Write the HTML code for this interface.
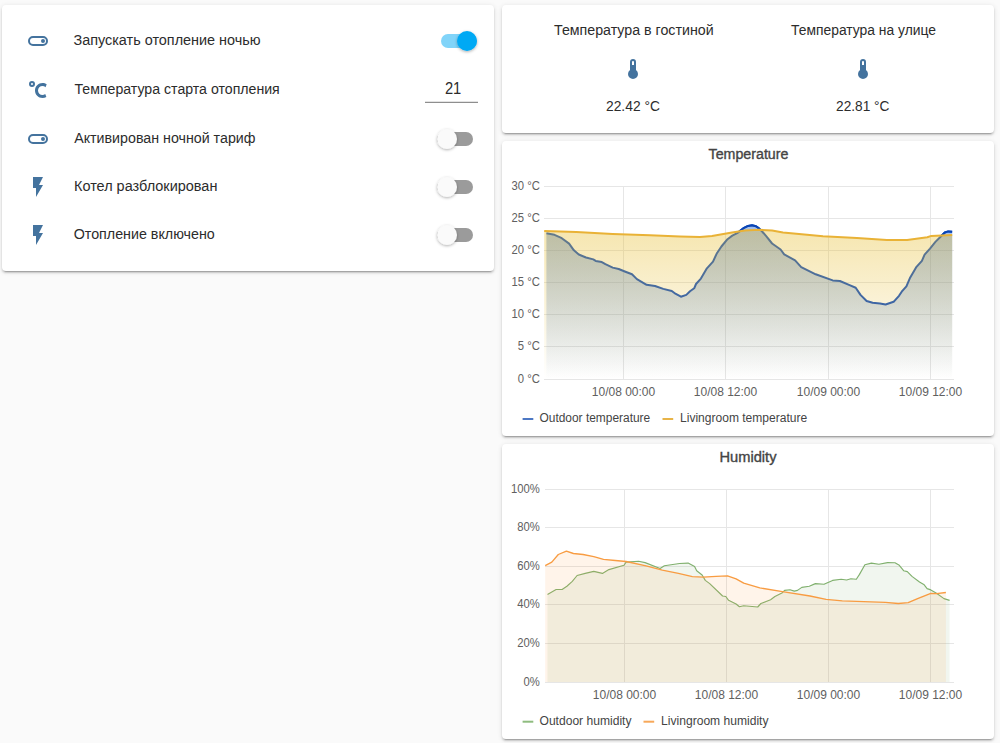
<!DOCTYPE html>
<html><head><meta charset="utf-8"><title>Dashboard</title>
<style>
html,body{margin:0;padding:0;}
body{width:1000px;height:743px;overflow:hidden;background:#fafafa;position:relative;font-family:"Liberation Sans", sans-serif;}
.card{position:absolute;background:#fff;border-radius:4px;box-shadow:0 2px 2px 0 rgba(0,0,0,.14),0 1px 5px 0 rgba(0,0,0,.12),0 3px 1px -2px rgba(0,0,0,.2);}
</style></head><body>
<div class="card" style="left:2px;top:5px;width:492px;height:266px"></div>
<div class="card" style="left:502px;top:5px;width:492px;height:128px"></div>
<div class="card" style="left:502px;top:141px;width:492px;height:295px"></div>
<div class="card" style="left:502px;top:444px;width:492px;height:295px"></div>
<svg width="1000" height="743" viewBox="0 0 1000 743" style="position:absolute;left:0;top:0" font-family='"Liberation Sans", sans-serif'><defs><linearGradient id="gb" gradientUnits="userSpaceOnUse" x1="0" y1="186" x2="0" y2="379"><stop offset="0" stop-color="#2060c8" stop-opacity="0.53"/><stop offset="1" stop-color="#2060c8" stop-opacity="0"/></linearGradient><linearGradient id="gy" gradientUnits="userSpaceOnUse" x1="0" y1="186" x2="0" y2="379"><stop offset="0" stop-color="#e7be32" stop-opacity="0.5"/><stop offset="1" stop-color="#e7be32" stop-opacity="0"/></linearGradient></defs><path transform="translate(26,29)" d="M17,7H7A5,5 0 0,0 2,12A5,5 0 0,0 7,17H17A5,5 0 0,0 22,12A5,5 0 0,0 17,7M17,15H7A3,3 0 0,1 4,12A3,3 0 0,1 7,9H17A3,3 0 0,1 20,12A3,3 0 0,1 17,15M17,10A2,2 0 0,0 15,12A2,2 0 0,0 17,14A2,2 0 0,0 19,12A2,2 0 0,0 17,10Z" fill="#44739e"/><path transform="translate(26,78)" d="M16.5,5C18.05,5 19.5,5.47 20.69,6.28L19.53,9.17C18.73,8.44 17.67,8 16.5,8C14,8 12,10 12,12.5C12,15 14,17 16.5,17C17.53,17 18.47,16.65 19.23,16.07L20.37,18.93C19.24,19.6 17.92,20 16.5,20C12.36,20 9,16.64 9,12.5C9,8.36 12.36,5 16.5,5M6,3A3,3 0 0,1 9,6A3,3 0 0,1 6,9A3,3 0 0,1 3,6A3,3 0 0,1 6,3M6,5A1,1 0 0,0 5,6A1,1 0 0,0 6,7A1,1 0 0,0 7,6A1,1 0 0,0 6,5Z" fill="#44739e"/><path transform="translate(26,127)" d="M17,7H7A5,5 0 0,0 2,12A5,5 0 0,0 7,17H17A5,5 0 0,0 22,12A5,5 0 0,0 17,7M17,15H7A3,3 0 0,1 4,12A3,3 0 0,1 7,9H17A3,3 0 0,1 20,12A3,3 0 0,1 17,15M17,10A2,2 0 0,0 15,12A2,2 0 0,0 17,14A2,2 0 0,0 19,12A2,2 0 0,0 17,10Z" fill="#44739e"/><path transform="translate(26,175)" d="M7,2V13H10V22L17,10H13L17,2H7Z" fill="#44739e"/><path transform="translate(26,223)" d="M7,2V13H10V22L17,10H13L17,2H7Z" fill="#44739e"/><text x="73.47" y="45" font-size="14" fill="#2c2c2c" textLength="187.12" lengthAdjust="spacingAndGlyphs">Запускать отопление ночью</text><text x="74.50" y="94" font-size="14" fill="#2c2c2c" textLength="205.24" lengthAdjust="spacingAndGlyphs">Температура старта отопления</text><text x="74.20" y="143" font-size="14" fill="#2c2c2c" textLength="181.29" lengthAdjust="spacingAndGlyphs">Активирован ночной тариф</text><text x="73.97" y="191" font-size="14" fill="#2c2c2c" textLength="143.42" lengthAdjust="spacingAndGlyphs">Котел разблокирован</text><text x="73.68" y="239" font-size="14" fill="#2c2c2c" textLength="141.10" lengthAdjust="spacingAndGlyphs">Отопление включено</text><text x="444.88" y="94" font-size="16" fill="#2c2c2c" textLength="16.35" lengthAdjust="spacingAndGlyphs">21</text><rect x="425" y="101.8" width="53" height="1" fill="#737373"/><text x="554.00" y="35" font-size="14" fill="#2c2c2c" textLength="159.59" lengthAdjust="spacingAndGlyphs">Температура в гостиной</text><path transform="translate(621,57)" d="M15,13V5A3,3 0 0,0 9,5V13A5,5 0 0,0 7,17A5,5 0 0,0 12,22A5,5 0 0,0 17,17A5,5 0 0,0 15,13M12,4A1,1 0 0,1 13,5V8H11V5A1,1 0 0,1 12,4Z" fill="#44739e"/><text x="606.01" y="110.5" font-size="14" fill="#2c2c2c" textLength="53.92" lengthAdjust="spacingAndGlyphs">22.42 °C</text><text x="791.10" y="35" font-size="14" fill="#2c2c2c" textLength="144.92" lengthAdjust="spacingAndGlyphs">Температура на улице</text><path transform="translate(851,57)" d="M15,13V5A3,3 0 0,0 9,5V13A5,5 0 0,0 7,17A5,5 0 0,0 12,22A5,5 0 0,0 17,17A5,5 0 0,0 15,13M12,4A1,1 0 0,1 13,5V8H11V5A1,1 0 0,1 12,4Z" fill="#44739e"/><text x="836.02" y="110.5" font-size="14" fill="#2c2c2c" textLength="53.40" lengthAdjust="spacingAndGlyphs">22.81 °C</text><text x="708.60" y="158.8" font-size="14" fill="#444" textLength="79.80" lengthAdjust="spacingAndGlyphs" stroke="#444" stroke-width="0.35">Temperature</text><rect x="544" y="186.0" width="410.0" height="1" fill="#e6e6e6"/><text x="539.8" y="190.1" font-size="12" fill="#606060" text-anchor="end" textLength="28.34" lengthAdjust="spacingAndGlyphs">30 °C</text><rect x="544" y="218.0" width="410.0" height="1" fill="#e6e6e6"/><text x="539.8" y="222.1" font-size="12" fill="#606060" text-anchor="end" textLength="28.34" lengthAdjust="spacingAndGlyphs">25 °C</text><rect x="544" y="250.0" width="410.0" height="1" fill="#e6e6e6"/><text x="539.8" y="254.1" font-size="12" fill="#606060" text-anchor="end" textLength="28.34" lengthAdjust="spacingAndGlyphs">20 °C</text><rect x="544" y="282.0" width="410.0" height="1" fill="#e6e6e6"/><text x="539.8" y="286.1" font-size="12" fill="#606060" text-anchor="end" textLength="28.34" lengthAdjust="spacingAndGlyphs">15 °C</text><rect x="544" y="314.0" width="410.0" height="1" fill="#e6e6e6"/><text x="539.8" y="318.1" font-size="12" fill="#606060" text-anchor="end" textLength="28.34" lengthAdjust="spacingAndGlyphs">10 °C</text><rect x="544" y="346.0" width="410.0" height="1" fill="#e6e6e6"/><text x="539.8" y="350.1" font-size="12" fill="#606060" text-anchor="end" textLength="22.06" lengthAdjust="spacingAndGlyphs">5 °C</text><rect x="544" y="379.0" width="410.0" height="1" fill="#e6e6e6"/><text x="539.8" y="383.1" font-size="12" fill="#606060" text-anchor="end" textLength="22.06" lengthAdjust="spacingAndGlyphs">0 °C</text><rect x="623.0" y="186.0" width="1" height="194.0" fill="#e6e6e6"/><rect x="725.0" y="186.0" width="1" height="194.0" fill="#e6e6e6"/><rect x="828.0" y="186.0" width="1" height="194.0" fill="#e6e6e6"/><rect x="930.0" y="186.0" width="1" height="194.0" fill="#e6e6e6"/><text x="623.5" y="395.7" font-size="12" fill="#606060" text-anchor="middle">10/08 00:00</text><text x="725.5" y="395.7" font-size="12" fill="#606060" text-anchor="middle">10/08 12:00</text><text x="828.5" y="395.7" font-size="12" fill="#606060" text-anchor="middle">10/09 00:00</text><text x="930.5" y="395.7" font-size="12" fill="#606060" text-anchor="middle">10/09 12:00</text><polygon points="546.4,233.3 554.5,234.8 561.8,238.2 569.1,243.6 573.9,250.3 578.8,254.5 586.0,257.5 593.3,259.4 595.7,260.9 601.8,262.1 605.4,264.2 612.7,267.6 618.7,269.0 624.8,271.5 632.0,274.3 636.9,279.1 646.6,284.8 655.0,286.0 663.3,288.9 671.8,291.0 675.4,293.7 680.9,296.7 686.3,294.9 690.0,291.3 694.2,288.3 696.0,284.0 700.9,278.6 706.9,268.3 713.0,261.6 716.6,253.8 721.4,246.5 727.5,239.2 732.3,235.6 737.2,233.2 740.5,230.6 744.0,227.8 748.0,225.9 752.0,225.3 756.0,226.3 759.0,228.4 762.6,232.0 766.2,236.2 772.1,243.5 780.6,249.5 784.2,254.4 795.1,260.4 801.2,267.1 815.7,274.3 832.7,280.4 839.9,281.0 849.6,285.2 855.7,287.7 860.5,294.9 866.6,301.0 872.6,302.8 880.0,303.4 885.6,304.5 893.6,301.8 899.0,295.8 901.7,291.7 906.4,286.3 909.8,278.3 916.5,266.8 921.9,260.8 924.6,254.7 930.0,248.6 935.4,241.9 940.8,236.5 944.8,232.5 948.2,231.4 952.2,231.8 952.2,379 546.4,379" fill="url(#gb)"/><polyline points="546.4,233.3 554.5,234.8 561.8,238.2 569.1,243.6 573.9,250.3 578.8,254.5 586.0,257.5 593.3,259.4 595.7,260.9 601.8,262.1 605.4,264.2 612.7,267.6 618.7,269.0 624.8,271.5 632.0,274.3 636.9,279.1 646.6,284.8 655.0,286.0 663.3,288.9 671.8,291.0 675.4,293.7 680.9,296.7 686.3,294.9 690.0,291.3 694.2,288.3 696.0,284.0 700.9,278.6 706.9,268.3 713.0,261.6 716.6,253.8 721.4,246.5 727.5,239.2 732.3,235.6 737.2,233.2 740.5,230.6 744.0,227.8 748.0,225.9 752.0,225.3 756.0,226.3 759.0,228.4 762.6,232.0 766.2,236.2 772.1,243.5 780.6,249.5 784.2,254.4 795.1,260.4 801.2,267.1 815.7,274.3 832.7,280.4 839.9,281.0 849.6,285.2 855.7,287.7 860.5,294.9 866.6,301.0 872.6,302.8 880.0,303.4 885.6,304.5 893.6,301.8 899.0,295.8 901.7,291.7 906.4,286.3 909.8,278.3 916.5,266.8 921.9,260.8 924.6,254.7 930.0,248.6 935.4,241.9 940.8,236.5 944.8,232.5 948.2,231.4 952.2,231.8" fill="none" stroke="#1450c0" stroke-width="2.0" stroke-linejoin="round"/><polygon points="544.2,230.9 576.3,232.1 612.7,233.9 650.0,235.2 680.0,236.4 700.0,236.9 712.0,236.0 722.0,234.3 732.0,232.4 745.0,230.6 759.0,229.8 772.1,230.5 783.0,232.6 823.0,236.2 856.9,238.0 886.9,239.9 907.1,239.9 927.3,237.2 931.3,235.9 952.2,234.9 952.2,379 544.2,379" fill="url(#gy)"/><clipPath id="abovey"><polygon points="544.2,230.9 576.3,232.1 612.7,233.9 650.0,235.2 680.0,236.4 700.0,236.9 712.0,236.0 722.0,234.3 732.0,232.4 745.0,230.6 759.0,229.8 772.1,230.5 783.0,232.6 823.0,236.2 856.9,238.0 886.9,239.9 907.1,239.9 927.3,237.2 931.3,235.9 952.2,234.9 955.2,180 544.2,180"/></clipPath><polyline clip-path="url(#abovey)" points="546.4,233.3 554.5,234.8 561.8,238.2 569.1,243.6 573.9,250.3 578.8,254.5 586.0,257.5 593.3,259.4 595.7,260.9 601.8,262.1 605.4,264.2 612.7,267.6 618.7,269.0 624.8,271.5 632.0,274.3 636.9,279.1 646.6,284.8 655.0,286.0 663.3,288.9 671.8,291.0 675.4,293.7 680.9,296.7 686.3,294.9 690.0,291.3 694.2,288.3 696.0,284.0 700.9,278.6 706.9,268.3 713.0,261.6 716.6,253.8 721.4,246.5 727.5,239.2 732.3,235.6 737.2,233.2 740.5,230.6 744.0,227.8 748.0,225.9 752.0,225.3 756.0,226.3 759.0,228.4 762.6,232.0 766.2,236.2 772.1,243.5 780.6,249.5 784.2,254.4 795.1,260.4 801.2,267.1 815.7,274.3 832.7,280.4 839.9,281.0 849.6,285.2 855.7,287.7 860.5,294.9 866.6,301.0 872.6,302.8 880.0,303.4 885.6,304.5 893.6,301.8 899.0,295.8 901.7,291.7 906.4,286.3 909.8,278.3 916.5,266.8 921.9,260.8 924.6,254.7 930.0,248.6 935.4,241.9 940.8,236.5 944.8,232.5 948.2,231.4 952.2,231.8" fill="none" stroke="#0a45b5" stroke-width="2.0" stroke-linejoin="round"/><polyline points="544.2,230.9 576.3,232.1 612.7,233.9 650.0,235.2 680.0,236.4 700.0,236.9 712.0,236.0 722.0,234.3 732.0,232.4 745.0,230.6 759.0,229.8 772.1,230.5 783.0,232.6 823.0,236.2 856.9,238.0 886.9,239.9 907.1,239.9 927.3,237.2 931.3,235.9 952.2,234.9" fill="none" stroke="#e9b236" stroke-width="2.0" stroke-linejoin="round"/><rect x="522.6" y="418" width="10.7" height="2" fill="#4d78c4"/><text x="539.51" y="421.6" font-size="12" fill="#444" textLength="110.70" lengthAdjust="spacingAndGlyphs">Outdoor temperature</text><rect x="662.5" y="418" width="10.7" height="2" fill="#e8b448"/><text x="680.00" y="421.6" font-size="12" fill="#444" textLength="127.24" lengthAdjust="spacingAndGlyphs">Livingroom temperature</text><text x="719.45" y="461.5" font-size="14" fill="#444" textLength="57.04" lengthAdjust="spacingAndGlyphs" stroke="#444" stroke-width="0.35">Humidity</text><rect x="545" y="489.0" width="409.0" height="1" fill="#e6e6e6"/><text x="539.8" y="493.1" font-size="12" fill="#606060" text-anchor="end" textLength="28.85" lengthAdjust="spacingAndGlyphs">100%</text><rect x="545" y="527.0" width="409.0" height="1" fill="#e6e6e6"/><text x="539.8" y="531.1" font-size="12" fill="#606060" text-anchor="end" textLength="22.58" lengthAdjust="spacingAndGlyphs">80%</text><rect x="545" y="566.0" width="409.0" height="1" fill="#e6e6e6"/><text x="539.8" y="570.1" font-size="12" fill="#606060" text-anchor="end" textLength="22.58" lengthAdjust="spacingAndGlyphs">60%</text><rect x="545" y="604.0" width="409.0" height="1" fill="#e6e6e6"/><text x="539.8" y="608.1" font-size="12" fill="#606060" text-anchor="end" textLength="22.58" lengthAdjust="spacingAndGlyphs">40%</text><rect x="545" y="643.0" width="409.0" height="1" fill="#e6e6e6"/><text x="539.8" y="647.1" font-size="12" fill="#606060" text-anchor="end" textLength="22.58" lengthAdjust="spacingAndGlyphs">20%</text><rect x="545" y="682.0" width="409.0" height="1" fill="#e6e6e6"/><text x="539.8" y="686.1" font-size="12" fill="#606060" text-anchor="end" textLength="16.30" lengthAdjust="spacingAndGlyphs">0%</text><rect x="624.0" y="489.0" width="1" height="194.0" fill="#e6e6e6"/><rect x="726.0" y="489.0" width="1" height="194.0" fill="#e6e6e6"/><rect x="828.0" y="489.0" width="1" height="194.0" fill="#e6e6e6"/><rect x="930.0" y="489.0" width="1" height="194.0" fill="#e6e6e6"/><text x="624.5" y="698.8" font-size="12" fill="#606060" text-anchor="middle">10/08 00:00</text><text x="726.5" y="698.8" font-size="12" fill="#606060" text-anchor="middle">10/08 12:00</text><text x="828.5" y="698.8" font-size="12" fill="#606060" text-anchor="middle">10/09 00:00</text><text x="930.5" y="698.8" font-size="12" fill="#606060" text-anchor="middle">10/09 12:00</text><polygon points="547.5,594.4 556.1,589.5 562.1,589.5 566.9,586.3 572.3,581.4 577.1,575.5 585.2,573.4 593.8,571.4 602.4,573.4 608.9,569.6 624.0,565.3 626.1,562.1 638.6,561.3 645.1,562.6 660.1,568.5 664.4,565.8 679.5,563.5 688.1,563.1 694.6,566.4 696.7,570.7 702.1,575.0 705.3,580.4 709.7,583.6 722.6,596.0 725.8,596.5 728.6,600.3 736.1,604.0 739.4,606.7 743.7,605.7 757.7,607.0 760.9,603.5 770.6,599.7 774.9,596.5 782.4,592.7 784.6,590.4 790.0,589.7 794.3,591.1 797.5,590.4 801.8,587.4 809.3,586.3 815.4,583.6 824.0,584.3 832.6,580.4 841.2,579.3 846.6,580.0 850.9,578.8 856.3,579.3 859.5,574.4 864.9,564.8 871.4,563.1 878.9,564.2 887.5,562.6 895.0,562.8 899.3,565.3 903.6,570.7 907.3,571.6 912.0,576.4 919.5,582.0 924.2,584.8 927.1,588.6 930.8,589.9 936.5,593.3 944.0,598.6 949.6,600.4 949.6,682 547.5,682" fill="#5f9f4a" fill-opacity="0.09"/><polyline points="547.5,594.4 556.1,589.5 562.1,589.5 566.9,586.3 572.3,581.4 577.1,575.5 585.2,573.4 593.8,571.4 602.4,573.4 608.9,569.6 624.0,565.3 626.1,562.1 638.6,561.3 645.1,562.6 660.1,568.5 664.4,565.8 679.5,563.5 688.1,563.1 694.6,566.4 696.7,570.7 702.1,575.0 705.3,580.4 709.7,583.6 722.6,596.0 725.8,596.5 728.6,600.3 736.1,604.0 739.4,606.7 743.7,605.7 757.7,607.0 760.9,603.5 770.6,599.7 774.9,596.5 782.4,592.7 784.6,590.4 790.0,589.7 794.3,591.1 797.5,590.4 801.8,587.4 809.3,586.3 815.4,583.6 824.0,584.3 832.6,580.4 841.2,579.3 846.6,580.0 850.9,578.8 856.3,579.3 859.5,574.4 864.9,564.8 871.4,563.1 878.9,564.2 887.5,562.6 895.0,562.8 899.3,565.3 903.6,570.7 907.3,571.6 912.0,576.4 919.5,582.0 924.2,584.8 927.1,588.6 930.8,589.9 936.5,593.3 944.0,598.6 949.6,600.4" fill="none" stroke="#80b06e" stroke-width="1.15" stroke-linejoin="round"/><polygon points="545.2,565.6 551.8,562.1 558.3,554.5 566.4,551.1 573.4,553.5 583.1,554.5 593.8,556.7 603.5,559.4 615.3,560.5 626.1,561.5 646.1,565.8 662.3,570.1 678.4,573.4 692.4,576.6 703.2,577.1 716.1,576.4 727.5,575.8 736.1,578.8 743.7,583.1 759.8,587.9 782.4,591.7 810.0,596.0 826.1,599.4 842.3,600.8 863.8,601.6 885.4,602.4 898.3,603.5 908.2,602.7 917.6,598.6 930.8,593.3 936.5,593.7 945.9,592.5 945.9,682 545.2,682" fill="#ff9a3c" fill-opacity="0.11"/><polyline points="545.2,565.6 551.8,562.1 558.3,554.5 566.4,551.1 573.4,553.5 583.1,554.5 593.8,556.7 603.5,559.4 615.3,560.5 626.1,561.5 646.1,565.8 662.3,570.1 678.4,573.4 692.4,576.6 703.2,577.1 716.1,576.4 727.5,575.8 736.1,578.8 743.7,583.1 759.8,587.9 782.4,591.7 810.0,596.0 826.1,599.4 842.3,600.8 863.8,601.6 885.4,602.4 898.3,603.5 908.2,602.7 917.6,598.6 930.8,593.3 936.5,593.7 945.9,592.5" fill="none" stroke="#f89c42" stroke-width="1.35" stroke-linejoin="round"/><rect x="522.6" y="720.7" width="10.7" height="2" fill="#8fbc7f"/><text x="539.49" y="724.6" font-size="12" fill="#444" textLength="92.00" lengthAdjust="spacingAndGlyphs">Outdoor humidity</text><rect x="643.5" y="720.7" width="10.7" height="2" fill="#f7a85a"/><text x="661.09" y="724.6" font-size="12" fill="#444" textLength="107.42" lengthAdjust="spacingAndGlyphs">Livingroom humidity</text><defs><filter id="ks" x="-50%" y="-50%" width="200%" height="200%"><feDropShadow dx="0" dy="1" stdDeviation="1.4" flood-color="#000" flood-opacity="0.32"/></filter></defs><rect x="441" y="34" width="36" height="14" rx="7" fill="#03a9f4" fill-opacity="0.5"/><circle cx="467" cy="41" r="10" fill="#03a9f4" filter="url(#ks)"/><rect x="437" y="132" width="36" height="14" rx="7" fill="#9b9b9b"/><circle cx="447" cy="139" r="10" fill="#fafafa" filter="url(#ks)"/><rect x="437" y="180" width="36" height="14" rx="7" fill="#9b9b9b"/><circle cx="447" cy="187" r="10" fill="#fafafa" filter="url(#ks)"/><rect x="437" y="228" width="36" height="14" rx="7" fill="#9b9b9b"/><circle cx="447" cy="235" r="10" fill="#fafafa" filter="url(#ks)"/></svg>
</body></html>
